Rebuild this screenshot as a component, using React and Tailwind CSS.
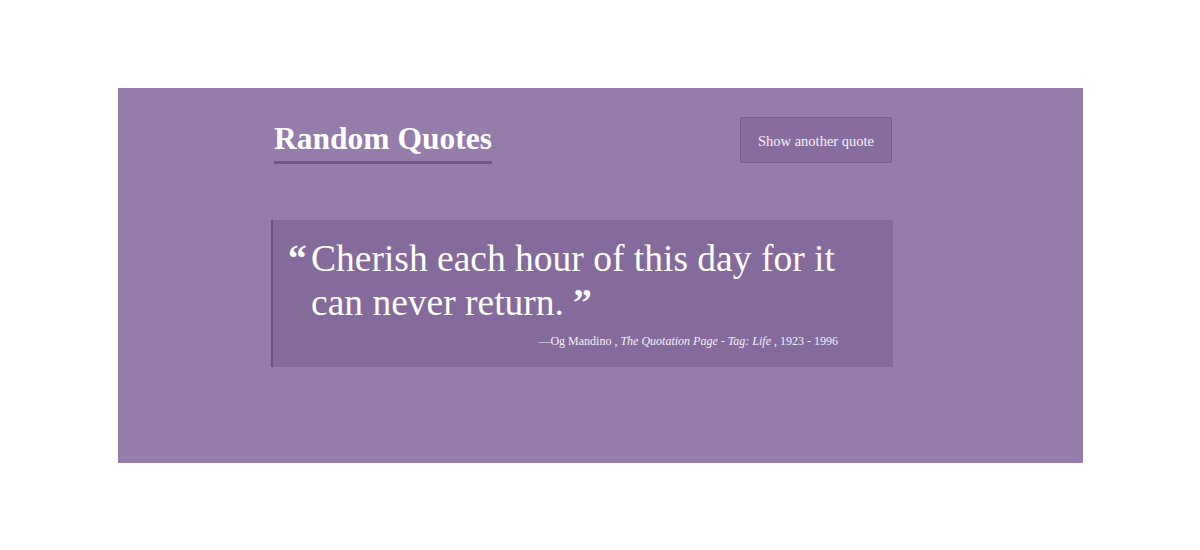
export default function App() {
  const serif = { fontFamily: '"Liberation Serif", "DejaVu Serif", serif' };
  return (
    <div className="w-[1200px] h-[550px] bg-white pt-[88px] pl-[118px]" style={serif}>
      <div className="w-[965px] h-[375px] bg-[#947cab] pl-[153px]">
        <div className="w-[622px]">
          <div className="flex items-start justify-between pt-[29px]">
            <h1 className="mt-[4px] ml-[3px] text-[31.5px] leading-[36px] font-bold text-white pb-[4px] border-b-[3px] border-[#6e5986]">
              Random Quotes
            </h1>
            <button className="h-[46px] w-[152px] mr-[1px] pt-[3px] rounded-[3px] bg-[#866d9d] border border-[#76608c] text-[14.5px] text-[#f5f0f8]">
              Show another quote
            </button>
          </div>
          <div className="mt-[56px] h-[147px] bg-[#846b9b] border-l-2 border-[#6a557f] pt-[17px] pl-[15px]">
            <div className="flex">
              <span className="w-[23px] shrink-0 text-[37.5px] leading-[44px] font-bold text-white">“</span>
              <div className="w-[527px]">
                <p className="text-[37.5px] leading-[44px] text-white">
                  Cherish each hour of this day for it can never return.<b className="ml-[9px]">”</b>
                </p>
                <p className="mt-[8px] text-[12px] leading-[16px] text-right text-[#f3eef6]">
                  —Og Mandino , <em>The Quotation Page - Tag: Life</em> , 1923 - 1996
                </p>
              </div>
            </div>
          </div>
        </div>
      </div>
    </div>
  );
}
